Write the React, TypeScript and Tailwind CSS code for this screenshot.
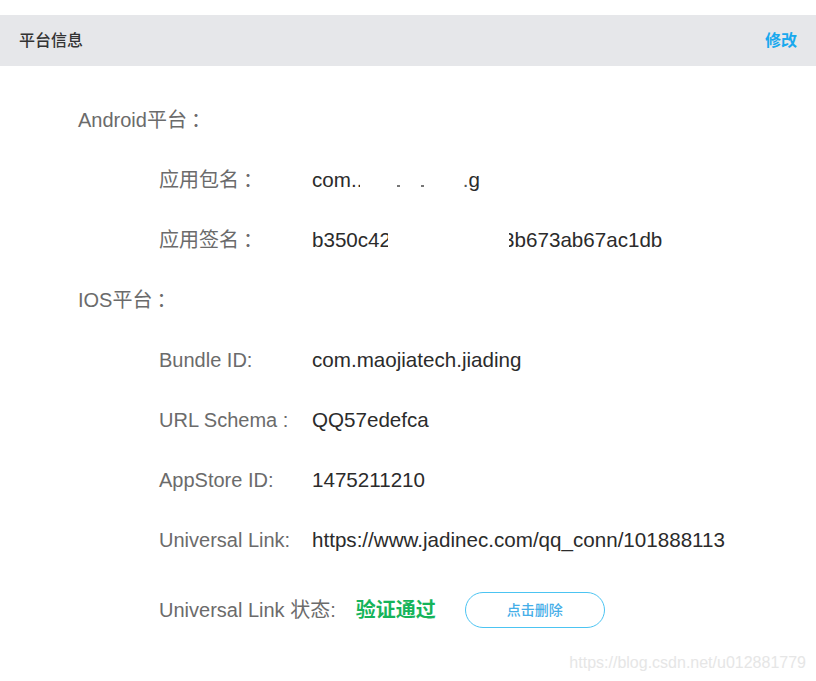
import React from "react";

const font = { fontFamily: '"Liberation Sans", "Noto Sans CJK SC", sans-serif' };

function Colon() {
  return <span className="ml-[4px]">：</span>;
}

function SubRow({ label, children }: { label: React.ReactNode; children: React.ReactNode }) {
  return (
    <div className="flex h-[60px] items-center pl-[81px]">
      <div className="w-[153px] shrink-0 text-[20px] text-[#6b6b6b]">{label}</div>
      <div className="flex items-center text-[20.6px] text-[#2b2b2b] whitespace-nowrap">{children}</div>
    </div>
  );
}

export default function App() {
  return (
    <div className="relative h-[681px] w-[816px] overflow-hidden bg-white" style={font}>
      <div className="h-[15px]" />
      <div className="flex h-[51px] items-center justify-between bg-[#e6e7ea] pl-[19px] pr-[19px]">
        <span className="text-[16px] font-medium text-[#333]">平台信息</span>
        <span className="text-[16px] font-semibold text-[#19a9ee]">修改</span>
      </div>
      <div className="pl-[78px] pt-[24px]">
        <div className="flex h-[60px] items-center text-[20px] text-[#6b6b6b]">
          Android平台<Colon />
        </div>
        <SubRow label={<>应用包名<Colon /></>}>
          <span>com.</span>
          <span className="inline-block w-[3px] overflow-hidden">.</span>
          <span className="inline-block w-[37px]" />
          <span className="inline-block h-[2px] w-[3px] translate-y-[6px] bg-[#777]" />
          <span className="inline-block w-[21px]" />
          <span className="inline-block h-[2px] w-[3px] translate-y-[6px] bg-[#777]" />
          <span className="inline-block w-[39px]" />
          <span className="text-[#555]">.</span>
          <span>g</span>
        </SubRow>
        <SubRow label={<>应用签名<Colon /></>}>
          <span>b350c4</span>
          <span className="inline-block w-[8px] overflow-hidden">2</span>
          <span className="inline-block w-[121px]" />
          <span className="flex w-[6px] justify-end overflow-hidden">3</span>
          <span>b673ab67ac1db</span>
        </SubRow>
        <div className="flex h-[60px] items-center text-[20px] text-[#6b6b6b]">
          IOS平台<Colon />
        </div>
        <SubRow label="Bundle ID:">com.maojiatech.jiading</SubRow>
        <SubRow label="URL Schema :">QQ57edefca</SubRow>
        <SubRow label="AppStore ID:">1475211210</SubRow>
        <SubRow label="Universal Link:">https://www.jadinec.com/qq_conn/101888113</SubRow>
        <div className="mt-[10px] flex h-[60px] items-center pl-[81px] text-[20px]">
          <span className="text-[#6b6b6b]">Universal Link 状态:</span>
          <span className="ml-[20px] font-bold text-[#16b45a]">验证通过</span>
          <button className="ml-[29px] flex h-[36px] w-[140px] items-center justify-center rounded-full border border-[#4cc4f2] bg-white text-[14px] font-medium text-[#45aee8]">
            点击删除
          </button>
        </div>
      </div>
      <div className="absolute right-[10px] top-[651px] text-[16px] text-[#e6e6e6]">
        https://blog.csdn.net/u012881779
      </div>
    </div>
  );
}
